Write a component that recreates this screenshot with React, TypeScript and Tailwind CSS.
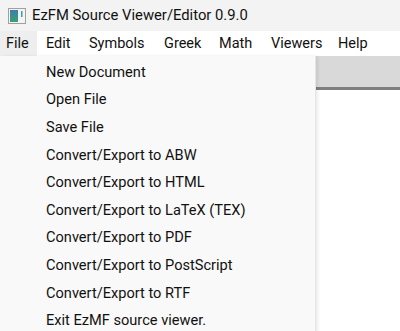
import React from "react";

const items = [
  "New Document",
  "Open File",
  "Save File",
  "Convert/Export to ABW",
  "Convert/Export to HTML",
  "Convert/Export to LaTeX (TEX)",
  "Convert/Export to PDF",
  "Convert/Export to PostScript",
  "Convert/Export to RTF",
  "Exit EzMF source viewer.",
];

const menus: [string, string][] = [
  ["File", "w-[37px] pl-[6px] bg-[#eeeeee]"],
  ["Edit", "w-[43px] pl-[9px]"],
  ["Symbols", "w-[75px] pl-[9px]"],
  ["Greek", "w-[55px] pl-[9px]"],
  ["Math", "w-[52px] pl-[9px]"],
  ["Viewers", "w-[67px] pl-[9px]"],
  ["Help", "w-[50px] pl-[9px]"],
];

function AppIcon() {
  return (
    <svg width="18" height="16" viewBox="0 0 18 16">
      <rect x="0.5" y="0.5" width="17" height="15" fill="#f4f4f4" stroke="#a0a0a0" />
      <defs>
        <linearGradient id="g" x1="0" y1="0" x2="0" y2="1">
          <stop offset="0" stopColor="#3a7fb0" />
          <stop offset="1" stopColor="#3aa070" />
        </linearGradient>
      </defs>
      <rect x="2" y="2" width="8" height="12" fill="url(#g)" />
      <rect x="13" y="3" width="1.5" height="6" fill="#3aa0a0" />
    </svg>
  );
}

export default function App() {
  return (
    <div
      className="w-[400px] h-[331px] overflow-hidden bg-white flex flex-col text-[#111111]"
      style={{ fontFamily: 'Roboto, "Open Sans", sans-serif' }}
    >
      <div className="h-[31px] bg-[#f3f3f3] flex items-center pl-[8px] gap-[6px] shrink-0">
        <AppIcon />
        <span className="text-[14.8px]">EzFM Source Viewer/Editor 0.9.0</span>
      </div>
      <div className="h-[25px] bg-white flex items-stretch shrink-0 text-[14.5px]">
        {menus.map(([m, c]) => (
          <div key={m} className={"flex items-center pt-[1px] shrink-0 " + c}>
            {m}
          </div>
        ))}
      </div>
      <div className="flex flex-1 relative">
        <div className="w-[316px] bg-[#f9f9f9] border-r border-[#e6e6e6] shadow-[2px_0_3px_rgba(0,0,0,0.08)] pt-[3px] flex flex-col z-10 text-[14.6px]">
          {items.map((t) => (
            <div key={t} className="h-[27.6px] flex items-center pl-[46px] whitespace-nowrap">
              {t}
            </div>
          ))}
        </div>
        <div className="flex-1 flex flex-col">
          <div className="h-[31px] bg-[#d9d9d9]" />
          <div className="h-[3px] bg-[#7f7f7f]" />
          <div className="flex-1 bg-white" />
        </div>
      </div>
    </div>
  );
}
